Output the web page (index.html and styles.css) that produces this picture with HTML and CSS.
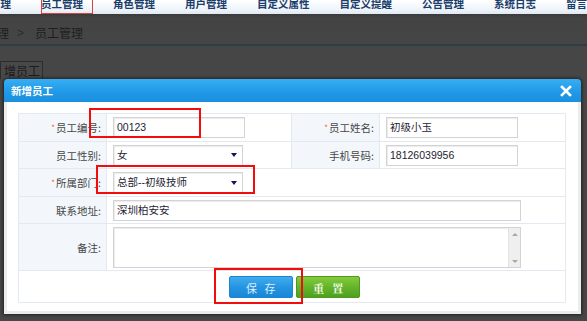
FILE: index.html
```html
<!DOCTYPE html>
<html>
<head>
<meta charset="UTF-8" />
<title>新增员工</title>
<link rel="stylesheet" href="styles.css">
</head>
<body>
<div class="page">
  <div class="nav">
    <span class="nav-item">部门管理</span><i class="sep"></i>
    <span class="nav-item">员工管理</span><i class="sep"></i>
    <span class="nav-item">角色管理</span><i class="sep"></i>
    <span class="nav-item">用户管理</span><i class="sep"></i>
    <span class="nav-item">自定义属性</span><i class="sep"></i>
    <span class="nav-item">自定义提醒</span><i class="sep"></i>
    <span class="nav-item">公告管理</span><i class="sep"></i>
    <span class="nav-item">系统日志</span><i class="sep"></i>
    <span class="nav-item">留言管理</span>
  </div>
  <div class="crumb">
    <span class="crumb-first">管理</span>
    <span class="crumb-arrow">&gt;</span>
    <span>员工管理</span>
  </div>
  <div class="tabs"><span class="tab">增员工</span></div>
</div>

<div class="dialog">
  <div class="dialog-title">
    <span>新增员工</span>
    <svg class="close" width="12" height="12" viewBox="0 0 12 12">
      <path d="M2 2 L10 10 M10 2 L2 10" stroke="#fff" stroke-width="2.6" stroke-linecap="square" />
    </svg>
  </div>
  <div class="dialog-body">
    <table class="form">
      <colgroup>
        <col class="c-label" />
        <col class="c-field" />
        <col class="c-label" />
        <col />
      </colgroup>
      <tr class="r1">
        <td class="label"><em>*</em>员工编号:</td>
        <td class="field"><div class="input short">00123</div></td>
        <td class="label"><em>*</em>员工姓名:</td>
        <td class="field"><div class="input short">初级小玉</div></td>
      </tr>
      <tr class="r2">
        <td class="label">员工性别:</td>
        <td class="field"><div class="select">女<b class="arrow"></b></div></td>
        <td class="label">手机号码:</td>
        <td class="field"><div class="input short">18126039956</div></td>
      </tr>
      <tr class="r3">
        <td class="label"><em>*</em>所属部门:</td>
        <td class="field" colspan="3"><div class="select">总部--初级技师<b class="arrow"></b></div></td>
      </tr>
      <tr class="r4">
        <td class="label">联系地址:</td>
        <td class="field" colspan="3"><div class="input long">深圳柏安安</div></td>
      </tr>
      <tr class="r5">
        <td class="label">备注:</td>
        <td class="field" colspan="3">
          <div class="textarea">
            <div class="scroll"><span class="up"></span><span class="down"></span></div>
          </div>
        </td>
      </tr>
      <tr class="r6">
        <td class="actions" colspan="4">
          <span class="btn btn-save">保&nbsp;&nbsp;&nbsp;存</span>
          <span class="btn btn-reset">重&nbsp;&nbsp;&nbsp;置</span>
        </td>
      </tr>
    </table>
  </div>
</div>

<div class="mark mark-nav"></div>
<div class="mark mark-code"></div>
<div class="mark mark-dept"></div>
<div class="mark mark-btn"></div>
</body>
</html>
```

FILE: styles.css
```css
body {
	margin:0;
	width:587px;
	height:321px;
	overflow:hidden;
	position:relative;
	background-color:#464646;
	font-family:"Noto Sans CJK SC", sans-serif;
	font-size:11px;
}

/* page behind the dialog (already dimmed) */
.page
{
	height:321px;
}

.nav
{
	height:14px;
	overflow:hidden;
	display:flex;
	align-items:flex-start;
	margin-left:-46px;
	white-space:nowrap;
	background:linear-gradient(#ffffff, #eef4fa 70%, #dfe9f3);
}

.nav-item
{
	padding:0 15px;
	margin-top:-4px;
	font-size:10.5px;
	line-height:16px;
	font-weight:bold;
	color:#1b3d6b;
}

.sep
{
	width:1px;
	height:10px;
	margin-top:1px;
	background-color:#c3cfdc;
}

.crumb
{
	height:32px;
	display:flex;
	align-items:center;
	padding-top:7px;
	box-sizing:border-box;
	background:linear-gradient(#3a3a3a, #444 4px, #454545);
	border-bottom:2px solid #2f3f46;
	color:#1e1e1e;
	font-size:12px;
	line-height:14px;
}

.crumb-first
{
	margin-left:-15px;
}

.crumb-arrow
{
	margin:0 11px 0 8px;
	font-family:"Liberation Sans", sans-serif;
	color:#2a2a2a;
}

.tabs
{
	padding-top:15px;
}

.tab
{
	display:inline-block;
	padding:1px 2px 0 3px;
	border:1px solid #2c2c2c;
	border-bottom:0;
	background-color:#484848;
	color:#1c1c1c;
	font-size:12px;
	line-height:16px;
}

/* dialog */
.dialog
{
	position:absolute;
	left:4px;
	top:79px;
	width:577px;
	box-shadow:0 0 3px 1px rgba(20,20,20,0.7);
	border-radius:4px 4px 0 0;
}

.dialog-title
{
	height:23px;
	display:flex;
	align-items:center;
	justify-content:space-between;
	padding:0 9px 0 7px;
	border-radius:4px 4px 0 0;
	background:linear-gradient(#37aef3, #1f98e6 60%, #1b8fde);
	color:#fff;
	font-weight:bold;
	font-size:10.5px;
}

.close
{
	margin-top:1px;
}

.dialog-body
{
	background-color:#fff;
	border:3px solid #ececec;
	border-top:0;
	padding:11px 12px 8px 11px;
}

.form
{
	width:548px;
	border-collapse:collapse;
	table-layout:fixed;
}

.c-label
{
	width:88px;
}

.c-field
{
	width:185px;
}

.form td
{
	border:1px solid #e3e9f0;
	padding:0;
}

.form .label
{
	padding-right:5px;
	text-align:right;
	background-color:#f3f7fc;
	color:#474747;
	font-size:10.5px;
	white-space:nowrap;
}

.label em
{
	font-style:normal;
	color:#ff5a1e;
	font-size:8px;
	vertical-align:1px;
	margin-right:1px;
}

.field
{
	padding-left:6px !important;
}

.r1 td { height:27px; }
.r2 td { height:26px; }
.r3 td { height:27px; }
.r4 td { height:26px; }
.r5 td { height:46px; }
.r6 td { height:31px; }

.input,
.select,
.textarea
{
	box-sizing:border-box;
	border:1px solid #d3d3d3;
	box-shadow:inset 1px 1px 1px #ececec;
	background-color:#fff;
	height:21px;
	padding-left:3px;
	line-height:19px;
	font-family:"Liberation Sans", "Noto Sans CJK SC", sans-serif;
	font-size:10.5px;
	color:#1e1e32;
}

.short
{
	width:132px;
}

.long
{
	width:408px;
}

.select
{
	width:130px;
	display:flex;
	align-items:center;
	justify-content:space-between;
	padding-right:5px;
}

.arrow
{
	width:0;
	height:0;
	border-left:3px solid transparent;
	border-right:3px solid transparent;
	border-top:4px solid #14145a;
}

.textarea
{
	width:408px;
	height:41px;
	display:flex;
	justify-content:flex-end;
	padding:0;
}

.scroll
{
	width:12px;
	display:flex;
	flex-direction:column;
	justify-content:space-between;
	align-items:center;
	padding:5px 0 4px;
	box-sizing:border-box;
	background-color:#efefef;
	border-left:1px solid #e2e2e2;
}

.up,
.down
{
	width:0;
	height:0;
	border-left:3px solid transparent;
	border-right:3px solid transparent;
}

.up
{
	border-bottom:3px solid #a8a8a8;
}

.down
{
	border-top:3px solid #a8a8a8;
}

.actions
{
	text-align:center;
	padding-left:5px !important;
}

.btn
{
	display:inline-block;
	width:64px;
	height:22px;
	line-height:22px;
	text-align:center;
	vertical-align:middle;
	font-size:11px;
	border-radius:2px;
	box-sizing:border-box;
}

.btn-save
{
	background:linear-gradient(#41acee, #2393e0 55%, #1a87d6);
	border:1px solid #1b86cf;
	color:#dcefff;
	margin-right:1px;
}

.btn-reset
{
	background:linear-gradient(#84cb3c, #62b22a 55%, #4fa01e);
	border:1px solid #4c9a1e;
	color:#f2fbe8;
	font-family:"Noto Serif CJK SC", serif;
	font-weight:bold;
}

/* red annotation frames */
.mark
{
	position:absolute;
	box-sizing:border-box;
	border:2px solid #f40b0b;
}

.mark-nav
{
	left:41px;
	top:-2px;
	width:52px;
	height:16px;
	border-width:1px;
	border-color:#d9413c;
}

.mark-code
{
	left:89px;
	top:108px;
	width:112px;
	height:30px;
}

.mark-dept
{
	left:96px;
	top:165px;
	width:159px;
	height:29px;
}

.mark-btn
{
	left:214px;
	top:268px;
	width:89px;
	height:36px;
}
```
